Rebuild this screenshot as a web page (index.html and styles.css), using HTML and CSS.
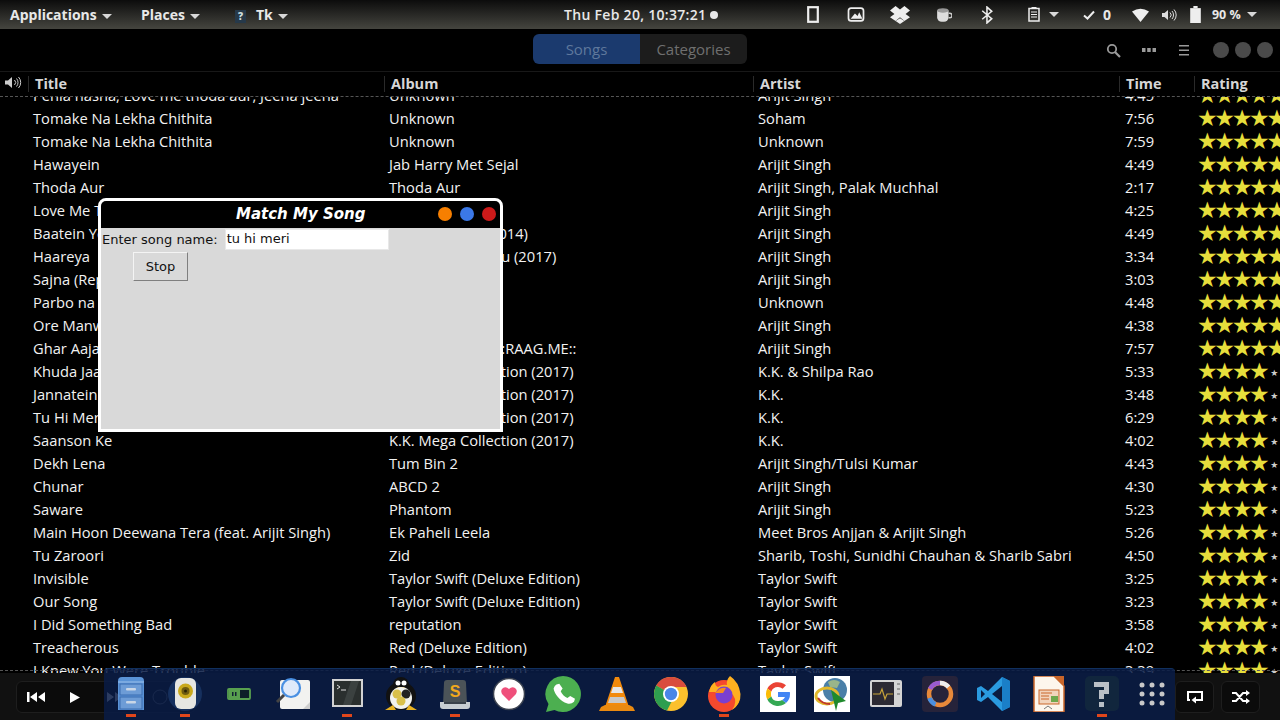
FILE: index.html
```html
<!DOCTYPE html>
<html lang="en">
<head>
  <meta charset="UTF-8" />
  <title>Music</title>
  <link rel="stylesheet" href="styles.css">
</head>
<body>

  <!-- Top panel -->
  <header class="panel">
    <div class="panel-left">
      <span class="menu menu-apps">Applications<i class="caret"></i></span>
      <span class="menu menu-places">Places<i class="caret"></i></span>
      <span class="menu menu-tk"><b class="tk-icon">?</b>Tk<i class="caret"></i></span>
    </div>
    <div class="clock">Thu Feb 20, 10:37:21<i class="clock-dot"></i></div>
    <div class="panel-right">
      <span class="tray"><svg width="12" height="17" viewBox="0 0 12 17"><rect x="1.200" y="1.200" width="9.600" height="14.600" fill="none" stroke="#eee" stroke-width="2.200"/></svg></span>
      <span class="tray"><svg width="18" height="15" viewBox="0 0 16 14"><rect x="1" y="1" width="14" height="12" rx="2.500" fill="none" stroke="#eee" stroke-width="1.600"/><path d="M3 11 7 6l2.500 2.500L11 5l3 6z" fill="#eee"/></svg></span>
      <span class="tray"><svg width="20" height="18" viewBox="0 0 18 16"><path d="M5 0 9 3l4-3 5 4-4 3 4 3-5 3.500L9 10l-4 3.500L0 10l4-3-4-3z" fill="#eee"/><path d="M5 13.500 9 11l4 2.500L9 16z" fill="#eee"/></svg></span>
      <span class="tray"><svg width="16" height="16" viewBox="0 0 14 14"><path d="M1 3h10v6a4 4 0 0 1-4 4H5a4 4 0 0 1-4-4z" fill="#ddd"/><ellipse cx="6" cy="3" rx="5" ry="2" fill="#999"/><path d="M11 5.500h1a1.500 1.500 0 0 1 0 4h-1" fill="none" stroke="#ccc" stroke-width="1.300"/></svg></span>
      <span class="tray"><svg width="13" height="18" viewBox="0 0 12 17"><path d="M1 4.500 10 12l-4.500 4V1L10 5l-9 7.500" fill="none" stroke="#eee" stroke-width="1.500"/></svg></span>
      <span class="tray tray-clip"><svg width="12" height="15" viewBox="0 0 12 15"><rect x="1" y="1.500" width="10" height="12.500" fill="none" stroke="#eee" stroke-width="1.500"/><path d="M3 5h6M3 7.500h6M3 10h6" stroke="#eee" stroke-width="1.200"/><rect x="3.500" y="0" width="5" height="2" fill="#eee"/></svg><i class="caret"></i></span>
      <span class="tray tray-check"><svg width="12" height="10" viewBox="0 0 12 10"><path d="M1 5.500 4.500 8.500 11 1.500" fill="none" stroke="#eee" stroke-width="2"/></svg><em>0</em></span>
      <span class="tray tray-wifi"><svg width="17" height="14" viewBox="0 0 17 14"><path d="M0 3.500Q8.500-2 17 3.500L8.500 14z" fill="#eee"/></svg></span>
      <span class="tray tray-vol"><svg width="17" height="12" viewBox="0 0 15 12"><path d="M0 4h2.500L6 1v10L2.500 8H0z" fill="#ddd"/><path d="M8 3.500a3.500 3.500 0 0 1 0 5M10 2a6 6 0 0 1 0 8M12 .5a8 8 0 0 1 0 11" fill="none" stroke="#ddd" stroke-width="1"/></svg></span>
      <span class="tray tray-batt"><svg width="11" height="17" viewBox="0 0 10 16"><rect x="3" y="0" width="4" height="2" fill="#eee"/><rect x="0" y="2" width="10" height="14" fill="#eee"/></svg></span>
      <span class="tray tray-percent">90 %<i class="caret"></i></span>
    </div>
  </header>

  <!-- Toolbar -->
  <div class="toolbar">
    <div class="tabs">
      <span class="tab tab-active">Songs</span>
      <span class="tab">Categories</span>
    </div>
    <div class="tools">
      <svg class="tool-search" width="15" height="15" viewBox="0 0 15 15"><circle cx="6" cy="6" r="4.200" fill="none" stroke="#9a9a9a" stroke-width="1.800"/><path d="M9 9l5 5" stroke="#9a9a9a" stroke-width="2.200"/></svg>
      <svg class="tool-more" width="14" height="4" viewBox="0 0 14 4"><path d="M0 0h3.500v4H0zM5.200 0h3.500v4H5.200zM10.500 0H14v4h-3.500z" fill="#9a9a9a"/></svg>
      <svg class="tool-menu" width="10" height="11" viewBox="0 0 10 11"><path d="M0 0h10v1.600H0zM0 4.500h10v1.600H0zM0 9h10v1.600H0z" fill="#9a9a9a"/></svg>
      <span class="win-dots"><i></i><i></i><i></i></span>
    </div>
  </div>

  <!-- Column headers -->
  <div class="columns">
    <span class="col-icon"><svg width="18" height="13" viewBox="0 0 18 13"><path d="M0 4.500h3L7 1v11L3 8.500H0z" fill="#ccc"/><path d="M9.500 4a3.500 3.500 0 0 1 0 5M11.500 2.500a6 6 0 0 1 0 8M13.500 1a8 8 0 0 1 0 11" fill="none" stroke="#ccc" stroke-width="1"/></svg></span>
    <span>Title</span>
    <span>Album</span>
    <span>Artist</span>
    <span>Time</span>
    <span>Rating</span>
  </div>

  <!-- Songs -->
  <main class="song-list">
    <div class="songs">
      <div class="row"><span>Pehla nasha, Love me thoda aur, Jeena jeena</span><span>Unknown</span><span>Arijit Singh</span><span>4:45</span><span class="stars">★★★★★</span></div>
      <div class="row"><span>Tomake Na Lekha Chithita</span><span>Unknown</span><span>Soham</span><span>7:56</span><span class="stars">★★★★★</span></div>
      <div class="row"><span>Tomake Na Lekha Chithita</span><span>Unknown</span><span>Unknown</span><span>7:59</span><span class="stars">★★★★★</span></div>
      <div class="row"><span>Hawayein</span><span>Jab Harry Met Sejal</span><span>Arijit Singh</span><span>4:49</span><span class="stars">★★★★★</span></div>
      <div class="row"><span>Thoda Aur</span><span>Thoda Aur</span><span>Arijit Singh, Palak Muchhal</span><span>2:17</span><span class="stars">★★★★★</span></div>
      <div class="row"><span>Love Me Thoda Aur</span><span>Yaariyan</span><span>Arijit Singh</span><span>4:25</span><span class="stars">★★★★★</span></div>
      <div class="row"><span>Baatein Ye Kabhi Na</span><span>Khamoshiyan (2014)</span><span>Arijit Singh</span><span>4:49</span><span class="stars">★★★★★</span></div>
      <div class="row"><span>Haareya</span><span>Meri Pyaari Bindu (2017)</span><span>Arijit Singh</span><span>3:34</span><span class="stars">★★★★★</span></div>
      <div class="row"><span>Sajna (Reprise)</span><span>Unknown</span><span>Arijit Singh</span><span>3:03</span><span class="stars">★★★★★</span></div>
      <div class="row"><span>Parbo na</span><span>Unknown</span><span>Unknown</span><span>4:48</span><span class="stars">★★★★★</span></div>
      <div class="row"><span>Ore Manwa</span><span>Unknown</span><span>Arijit Singh</span><span>4:38</span><span class="stars">★★★★★</span></div>
      <div class="row"><span>Ghar Aaja</span><span>Ghar Aaja Song ::RAAG.ME::</span><span>Arijit Singh</span><span>7:57</span><span class="stars">★★★★★</span></div>
      <div class="row"><span>Khuda Jaane</span><span>K.K. Mega Collection (2017)</span><span>K.K. &amp; Shilpa Rao</span><span>5:33</span><span class="stars">★★★★<small>★</small></span></div>
      <div class="row"><span>Jannatein Kahan</span><span>K.K. Mega Collection (2017)</span><span>K.K.</span><span>3:48</span><span class="stars">★★★★<small>★</small></span></div>
      <div class="row"><span>Tu Hi Meri Shab Hai</span><span>K.K. Mega Collection (2017)</span><span>K.K.</span><span>6:29</span><span class="stars">★★★★<small>★</small></span></div>
      <div class="row"><span>Saanson Ke</span><span>K.K. Mega Collection (2017)</span><span>K.K.</span><span>4:02</span><span class="stars">★★★★<small>★</small></span></div>
      <div class="row"><span>Dekh Lena</span><span>Tum Bin 2</span><span>Arijit Singh/Tulsi Kumar</span><span>4:43</span><span class="stars">★★★★<small>★</small></span></div>
      <div class="row"><span>Chunar</span><span>ABCD 2</span><span>Arijit Singh</span><span>4:30</span><span class="stars">★★★★<small>★</small></span></div>
      <div class="row"><span>Saware</span><span>Phantom</span><span>Arijit Singh</span><span>5:23</span><span class="stars">★★★★<small>★</small></span></div>
      <div class="row"><span>Main Hoon Deewana Tera (feat. Arijit Singh)</span><span>Ek Paheli Leela</span><span>Meet Bros Anjjan &amp; Arijit Singh</span><span>5:26</span><span class="stars">★★★★<small>★</small></span></div>
      <div class="row"><span>Tu Zaroori</span><span>Zid</span><span>Sharib, Toshi, Sunidhi Chauhan &amp; Sharib Sabri</span><span>4:50</span><span class="stars">★★★★<small>★</small></span></div>
      <div class="row"><span>Invisible</span><span>Taylor Swift (Deluxe Edition)</span><span>Taylor Swift</span><span>3:25</span><span class="stars">★★★★<small>★</small></span></div>
      <div class="row"><span>Our Song</span><span>Taylor Swift (Deluxe Edition)</span><span>Taylor Swift</span><span>3:23</span><span class="stars">★★★★<small>★</small></span></div>
      <div class="row"><span>I Did Something Bad</span><span>reputation</span><span>Taylor Swift</span><span>3:58</span><span class="stars">★★★★<small>★</small></span></div>
      <div class="row"><span>Treacherous</span><span>Red (Deluxe Edition)</span><span>Taylor Swift</span><span>4:02</span><span class="stars">★★★★<small>★</small></span></div>
      <div class="row"><span>I Knew You Were Trouble</span><span>Red (Deluxe Edition)</span><span>Taylor Swift</span><span>3:39</span><span class="stars">★★★★<small>★</small></span></div>
    </div>
  </main>

  <!-- Player controls -->
  <footer class="player">
    <div class="ctrl-group">
      <svg width="20" height="10" viewBox="0 0 20 10"><path d="M0 0h2.500v10H0zM10 0v10L3 5zM18 0v10l-7-5z" fill="#fff"/></svg>
      <svg class="ctrl-play" width="10" height="11" viewBox="0 0 10 11"><path d="M0 0l10 5.500L0 11z" fill="#fff"/></svg>
      <svg class="ctrl-next" width="15" height="10" viewBox="0 0 15 10"><path d="M0 0v10l7-5zM8 0v10l7-5z" fill="#fff"/></svg>
      <svg class="ctrl-seek" width="16" height="16" viewBox="0 0 16 16"><circle cx="8" cy="8" r="7" fill="none" stroke="#777" stroke-width="1"/></svg>
    </div>
    <div class="ctrl-right">
      <span class="ctrl-box"><svg width="16" height="14" viewBox="0 0 16 14"><path d="M3 10H1V2h14v8H8" fill="none" stroke="#fff" stroke-width="2"/><path d="M9 6.500v7L4.500 10z" fill="#fff"/></svg></span>
      <span class="ctrl-box"><svg width="18" height="14" viewBox="0 0 18 14"><path d="M0 3h4l7 8h3M0 11h4l7-8h3" fill="none" stroke="#fff" stroke-width="2"/><path d="M14 0l4 3-4 3zM14 8l4 3-4 3z" fill="#fff"/></svg></span>
    </div>
  </footer>

  <!-- Dock -->
  <nav class="dock">
    <div class="dock-item running"><svg viewBox="0 0 36 36"><path d="M5 5q0-4 4-4h18q4 0 4 4v29H5z" fill="#5a93d6"/><path d="M5 6h26" stroke="#9cc0ea" stroke-width="1"/><rect x="7" y="8" width="22" height="11" fill="#6d9cd6" stroke="#3a6cb0"/><rect x="7" y="21" width="22" height="12" fill="#6d9cd6" stroke="#3a6cb0"/><rect x="13" y="12" width="10" height="2.500" rx="1" fill="#c9d6e6"/><rect x="13" y="25" width="10" height="2.500" rx="1" fill="#c9d6e6"/></svg><i></i></div>
    <div class="dock-item running"><svg viewBox="0 0 36 36"><circle cx="18" cy="18" r="17" fill="#16305e"/><rect x="8" y="2" width="21" height="31" rx="6" fill="#e6e6e2"/><circle cx="18.500" cy="15" r="7.500" fill="#c9a91c"/><circle cx="18.500" cy="15" r="4" fill="#6f5c10"/><circle cx="18.500" cy="15" r="1.500" fill="#2b2406"/></svg><i></i></div>
    <div class="dock-item"><svg viewBox="0 0 36 36"><rect x="7" y="13" width="22" height="10" rx="1" fill="#0e1f28" stroke="#58a04f" stroke-width="1.800"/><rect x="8" y="14" width="11" height="8" fill="#58a04f"/><rect x="11" y="16" width="1.500" height="4" fill="#123"/><rect x="14" y="16" width="1.500" height="4" fill="#123"/></svg></div>
    <div class="dock-item"><svg viewBox="0 0 36 36"><rect x="5" y="4" width="30" height="29" rx="2" fill="#f2f2f0"/><path d="M28 33l7-7v7z" fill="#cfcfcf"/><circle cx="16" cy="12" r="9" fill="#dfeafa" stroke="#4a90e2" stroke-width="2.200"/><path d="M9 19 2 26" stroke="#444" stroke-width="3"/></svg></div>
    <div class="dock-item running"><svg viewBox="0 0 36 36"><rect x="3" y="3" width="31" height="28" fill="#d2d2d2"/><rect x="5" y="5" width="27" height="24" fill="#2a2f2e"/><path d="M22 5 14 29h8l8-24z" fill="#3b4140"/><path d="M8 9l3 2-3 2" fill="none" stroke="#ddd" stroke-width="1"/><path d="M12 14h5" stroke="#ddd" stroke-width="1"/></svg><i></i></div>
    <div class="dock-item"><svg viewBox="0 0 36 36"><ellipse cx="18" cy="20" rx="15" ry="14" fill="#111"/><ellipse cx="18" cy="9" rx="8" ry="8" fill="#111"/><circle cx="15" cy="7" r="2.500" fill="#fff"/><circle cx="21" cy="7" r="2.500" fill="#fff"/><path d="M14 11h8l-4 3z" fill="#e3a91c"/><ellipse cx="18" cy="22" rx="11" ry="11" fill="#f2f2ee"/><circle cx="14" cy="18" r="4.500" fill="#d9c04a"/><circle cx="23" cy="18" r="4.500" fill="#222"/><circle cx="18" cy="25" r="4.500" fill="#d9c04a"/><path d="M2 34l8-5 3 5zM34 34l-8-5-3 5z" fill="#e9b320"/></svg></div>
    <div class="dock-item running"><svg viewBox="0 0 36 36"><path d="M6 28 7 7q0-3 3-3h16q3 0 3 3l1 21z" fill="#4b5358"/><path d="M3 26h30v4q0 3-3 3H6q-3 0-3-3z" fill="#c8ced2"/><path d="M7 26h22v2H7z" fill="#39414a"/><text x="18" y="21" class="sublime-s">S</text></svg><i></i></div>
    <div class="dock-item"><svg viewBox="0 0 36 36"><circle cx="18" cy="18" r="15.500" fill="#fff" stroke="#3b4250" stroke-width="1.500"/><path d="M18 25l-7-7q-2-4 1-6t6 1q3-3 6-1t1 6z" fill="#ef4f7b"/></svg></div>
    <div class="dock-item"><svg viewBox="0 0 36 36"><path d="M18 0a18 18 0 1 1-8.500 33.900L1 36l2.500-8A18 18 0 0 1 18 0z" fill="#4caf50"/><path d="M11 8l3-1 3.500 5-2 3q2 5 7 7l3-2 5 3-1 3q-3 3-7 2-6-2-10-7T8 12q1-3 3-4z" fill="#fff" transform="translate(1 1) scale(.95)"/></svg></div>
    <div class="dock-item"><svg viewBox="0 0 36 36"><path d="M16 1h4l10 30H6z" fill="#f28a0c"/><path d="M14 11h8l2 6H12z" fill="#e6e6e6"/><path d="M11 21h14l2 6H9z" fill="#c9c9c9"/><path d="M6 29h24l4 2 2 4H0l2-4z" fill="#ea8a10"/></svg></div>
    <div class="dock-item"><svg viewBox="0 0 36 36"><circle cx="18" cy="18" r="17" fill="#fbc02d"/><path d="M18 18 3.300 9.500A17 17 0 0 1 33.500 11H18z" fill="#d94c3d"/><path d="M18 18 3.300 9.500A17 17 0 0 0 14 34.500L22 19z" fill="#2e9e4f"/><circle cx="18" cy="18" r="8" fill="#fff"/><circle cx="18" cy="18" r="6.200" fill="#4a86e8"/></svg></div>
    <div class="dock-item running"><svg viewBox="0 0 36 36"><circle cx="18" cy="20" r="16" fill="#f5492d"/><path d="M3 16Q5 8 9 6q0 4 3 5 4-3 9-2-1-5 3-9 9 6 10.500 18Q35 28 26 34q6-8 1-15-6-6-13-3z" fill="#ffb020"/><circle cx="18" cy="19" r="8.500" fill="#7a3fd0"/><path d="M9 17q5-6 11-5l-3 5z" fill="#f78a1e"/></svg><i></i></div>
    <div class="dock-item"><svg viewBox="0 0 36 36"><rect width="36" height="36" fill="#fff"/><path d="M18 11a7 7 0 0 1 4.600 1.700l3.400-3.400A12 12 0 0 0 7.300 12.600l4 3A7 7 0 0 1 18 11z" fill="#ea4335"/><path d="M11 18a7 7 0 0 1 .3-2.400l-4-3a12 12 0 0 0 0 10.800l4-3A7 7 0 0 1 11 18z" fill="#fbbc05"/><path d="M18 25a7 7 0 0 1-6.700-4.600l-4 3A12 12 0 0 0 26 27l-3.800-3A7 7 0 0 1 18 25z" fill="#34a853"/><path d="M30 16H18v5h7a6 6 0 0 1-2.800 3l3.800 3q4-3.500 4-9 0-1-.2-2z" fill="#4285f4"/></svg></div>
    <div class="dock-item"><svg viewBox="0 0 36 36"><rect width="36" height="36" fill="#fff"/><circle cx="21" cy="14" r="12" fill="#4a7fa8"/><path d="M14 6q6-4 12 0l-3 6-7-1z" fill="#9ab58a"/><ellipse cx="13" cy="20" rx="11" ry="8" fill="none" stroke="#e2b92c" stroke-width="3"/><path d="M4 22q4 6 12 6" fill="none" stroke="#c0392b" stroke-width="2"/><path d="M17 14l15 11-8 2-2 8z" fill="#1f8a2c"/></svg></div>
    <div class="dock-item"><svg viewBox="0 0 36 36"><rect x="2" y="4" width="32" height="27" rx="2" fill="#d4d4d4"/><rect x="4" y="6" width="22" height="23" fill="#2c2a33"/><path d="M5 18h7l2-5 3 10 2-5h6" fill="none" stroke="#c8a43a" stroke-width="1.200"/><path d="M29 8h3M29 13h3M29 18h3" stroke="#888" stroke-width="1.500"/></svg></div>
    <div class="dock-item"><svg viewBox="0 0 36 36"><rect width="36" height="36" rx="4" fill="#26233a"/><circle cx="18" cy="18" r="11" fill="none" stroke="#e8893a" stroke-width="4.500"/><path d="M8 13a11 11 0 0 1 10-6" fill="none" stroke="#9a5bd0" stroke-width="4.500"/><path d="M7.500 22a11 11 0 0 0 6 6.500" fill="none" stroke="#4a8fe0" stroke-width="4.500"/><path d="M18 7a11 11 0 0 1 8.500 4" fill="none" stroke="#eee" stroke-width="4.500"/></svg></div>
    <div class="dock-item"><svg viewBox="0 0 36 36"><path d="M26 1l8 4v26l-8 4-14-14-7 5-4-2V12l4-2 7 5z" fill="#2a9be0"/><path d="M26 1v34l8-4V5z" fill="#1a7fc8"/><path d="M26 10 16 18l10 8z" fill="#0a1c40"/><path d="M5 14v8l4-4z" fill="#0a1c40"/></svg></div>
    <div class="dock-item"><svg viewBox="0 0 36 36"><path d="M4 0h20l10 10v26H4z" fill="#fdf6ec" stroke="#c9662a" stroke-width="1.500"/><path d="M24 0h10v10z" fill="#c9662a"/><rect x="9" y="14" width="20" height="14" fill="#f2d4bc" stroke="#c9662a"/><path d="M11 17h11M11 20h8M11 23h8" stroke="#c9662a" stroke-width="1.200"/><rect x="21" y="20" width="7" height="6" fill="#6fa84d"/><path d="M14 33l4-3 4 3" fill="none" stroke="#777"/></svg></div>
    <div class="dock-item running"><svg viewBox="0 0 36 36"><rect x="1" y="0" width="34" height="35" rx="5" fill="#11263d"/><path d="M10 6h15v12h-5v5h-5v-9h5v-3h-10z" fill="#b9c0c6"/><rect x="15" y="26" width="5" height="5" fill="#b9c0c6"/></svg><i></i></div>
    <div class="dock-item dock-grid"><svg viewBox="0 0 36 36"><g fill="#c8c8c8"><circle cx="8" cy="9" r="2.500"/><circle cx="18" cy="9" r="2.500"/><circle cx="28" cy="9" r="2.500"/><circle cx="8" cy="18" r="2.500"/><circle cx="18" cy="18" r="2.500"/><circle cx="28" cy="18" r="2.500"/><circle cx="8" cy="27" r="2.500"/><circle cx="18" cy="27" r="2.500"/><circle cx="28" cy="27" r="2.500"/></g></svg></div>
  </nav>

  <!-- Tk window -->
  <section class="tk-window">
    <div class="tk-title">
      <span>Match My Song</span>
      <div class="tk-dots"><i class="dot-orange"></i><i class="dot-blue"></i><i class="dot-red"></i></div>
    </div>
    <div class="tk-body">
      <div class="tk-line">
        <label>Enter song name:</label>
        <div class="tk-entry">tu hi meri</div>
      </div>
      <button class="tk-btn">Stop</button>
    </div>
  </section>

</body>
</html>
```

FILE: styles.css
```css
* {
  box-sizing: border-box;
}

body {
  margin: 0;
  width: 1280px;
  height: 720px;
  overflow: hidden;
  background: #000;
  color: #f2f2f2;
  font-family: "Open Sans", "Noto Sans", sans-serif;
  display: flex;
  flex-direction: column;
  position: relative;
}

i {
  display: block;
  font-style: normal;
}

.caret {
  display: inline-block;
  width: 0;
  height: 0;
  border-left: 5px solid transparent;
  border-right: 5px solid transparent;
  border-top: 5px solid #d8d8d8;
  vertical-align: middle;
}

/* top panel */
.panel {
  height: 29px;
  flex-shrink: 0;
  background: linear-gradient(#0c0c0c, #45453f);
  display: flex;
  align-items: center;
  font-size: 14px;
  font-weight: 700;
  color: #e8e8e8;
  position: relative;
}

.panel-left {
  display: flex;
  padding-left: 10px;
  width: 564px;
}

.menu .caret {
  margin-left: 5px;
}

.menu-apps {
  width: 131px;
}

.menu-places {
  width: 94px;
}

.tk-icon {
  display: inline-block;
  width: 11px;
  height: 13px;
  margin-right: 10px;
  background: #26394a;
  color: #cdd;
  font-size: 10px;
  line-height: 13px;
  text-align: center;
}

.clock {
  width: 227px;
  display: flex;
  align-items: center;
  letter-spacing: 0.3px;
  font-weight: 600;
}

.clock-dot {
  width: 8px;
  height: 8px;
  margin-left: 4px;
  border-radius: 50%;
  background: #e8e8e8;
}

.panel-right {
  flex: 1;
  display: flex;
  align-items: center;
}

.tray {
  width: 43.6px;
  display: flex;
  align-items: center;
  justify-content: center;
}

.tray-clip {
  width: 62px;
  gap: 9px;
  margin-left: 1px;
  padding-left: 6px;
}

.tray-check {
  width: 50px;
  gap: 8px;
}

.tray-check em {
  font-style: normal;
}

.tray-wifi {
  width: 32px;
  margin-left: 3px;
}

.tray-vol {
  width: 26px;
}

.tray-batt {
  width: 26px;
}

.tray-percent {
  width: auto;
  margin-left: 3px;
  gap: 6px;
  font-size: 12.5px;
}

/* toolbar */
.toolbar {
  height: 43px;
  flex-shrink: 0;
  border-bottom: 1px solid #181818;
  display: flex;
  align-items: center;
  padding-left: 533px;
}

.tabs {
  display: flex;
  height: 30px;
  margin-top: -2px;
}

.tab {
  width: 107px;
  background: #1c1c1c;
  color: #6f6f6f;
  font-size: 15px;
  line-height: 30px;
  text-align: center;
  border-radius: 0 6px 6px 0;
}

.tab-active {
  background: #1b3a6e;
  color: #5f789c;
  border-radius: 6px 0 0 6px;
}

.tools {
  margin-left: 359px;
  flex: 1;
  display: flex;
  align-items: center;
}

.tool-more {
  margin-left: 21px;
}

.tool-menu {
  margin-left: 23px;
}

.win-dots {
  display: flex;
  gap: 6px;
  margin-left: 24px;
}

.win-dots i {
  width: 16px;
  height: 16px;
  border-radius: 50%;
  background: #4a4a4a;
}

/* song columns */
.columns {
  height: 25px;
  flex-shrink: 0;
  display: grid;
  grid-template-columns: 28px 356px 369px 366px 75px 86px;
  align-items: center;
  font-size: 14.5px;
  font-weight: 700;
  color: #d6d6d6;
  border-bottom: 1px dashed #555;
  position: relative;
  z-index: 1;
}

.columns span {
  height: 16px;
  line-height: 16px;
  padding-left: 6px;
  border-left: 1px solid #2a2a2a;
}

.columns .col-icon {
  border-left: 0;
  padding-left: 5px;
}

.song-list {
  flex: 1;
  overflow: hidden;
  position: relative;
}

.song-list::after {
  content: "";
  position: absolute;
  left: 0;
  right: 0;
  bottom: 2px;
  border-top: 1px dashed #555;
}

.songs {
  margin-top: -13px;
}

.row {
  height: 23px;
  padding-left: 33px;
  display: grid;
  grid-template-columns: 356px 369px 367px 73px 82px;
  font-size: 14.7px;
  line-height: 23px;
  white-space: nowrap;
}

.stars {
  font-family: "DejaVu Sans", sans-serif;
  font-size: 23px;
  letter-spacing: -3.27px;
  color: #e6de3c;
  line-height: 23px;
  overflow: hidden;
  margin-left: -1px;
}

.stars small {
  display: inline-block;
  width: 16px;
  font-size: 9px;
  letter-spacing: 0;
  color: #ccc;
  text-align: center;
  vertical-align: 3px;
}

/* bottom player bar */
.player {
  height: 47px;
  flex-shrink: 0;
  background: #111;
  display: flex;
  justify-content: space-between;
  padding: 8px 20px 7px 16px;
}

.ctrl-group {
  width: 180px;
  display: flex;
  align-items: center;
  padding-left: 10px;
  background: #0b0b0b;
  border: 1px solid #1e1e1e;
  border-radius: 6px;
}

.ctrl-play {
  margin-left: 23px;
}

.ctrl-next {
  margin-left: 27px;
}

.ctrl-seek {
  margin-left: 30px;
}

.ctrl-right {
  display: flex;
  gap: 7px;
}

.ctrl-box {
  width: 39px;
  display: flex;
  align-items: center;
  justify-content: center;
  background: #0b0b0b;
  border: 1px solid #1e1e1e;
  border-radius: 6px;
}

.dock {
  position: absolute;
  left: 104px;
  top: 668px;
  width: 1071px;
  height: 52px;
  background: rgba(9, 28, 70, 0.86);
  border-top: 1px solid #10305e;
  border-radius: 4px 4px 0 0;
  display: flex;
  padding-top: 7px;
}

.dock-item {
  width: 54px;
  display: flex;
  flex-direction: column;
  align-items: center;
  gap: 2px;
}

.dock-item svg {
  width: 36px;
  height: 36px;
  flex-shrink: 0;
}

.dock-item i {
  width: 10px;
  height: 3px;
  background: #e0461b;
}

.dock-grid {
  width: 46px;
}

.sublime-s {
  font-family: "Liberation Sans", sans-serif;
  font-size: 16px;
  font-weight: 700;
  fill: #f2a91c;
  text-anchor: middle;
}

/* Tk window */
.tk-window {
  position: absolute;
  left: 98px;
  top: 198px;
  width: 405px;
  height: 234px;
  border: 3px solid #fff;
  border-radius: 8px 8px 0 0;
  background: #d9d9d9;
  display: flex;
  flex-direction: column;
  font-family: "DejaVu Sans", sans-serif;
  color: #111;
}

.tk-title {
  height: 27px;
  flex-shrink: 0;
  background: #000;
  border-radius: 5px 5px 0 0;
  display: flex;
  align-items: center;
  color: #fff;
  font-size: 15px;
  font-weight: 700;
  font-style: italic;
  padding: 0 0 2px 135px;
}

.tk-dots {
  display: flex;
  gap: 8px;
  margin-left: 73px;
}

.tk-dots i {
  width: 14px;
  height: 14px;
  border-radius: 50%;
}

.dot-orange {
  background: #f77f00;
}

.dot-blue {
  background: #3b78e7;
}

.dot-red {
  background: #cc1a1a;
}

.tk-body {
  font-size: 13px;
  padding: 1px 0 0 1px;
}

.tk-line {
  display: flex;
  align-items: center;
  gap: 7px;
  height: 21px;
}

.tk-entry {
  width: 164px;
  height: 21px;
  background: #fff;
  border: 1px solid #e8e8e8;
  line-height: 18px;
  padding-left: 1px;
}

.tk-btn {
  display: block;
  width: 55px;
  height: 29px;
  margin: 2px 0 0 31px;
  background: #d9d9d9;
  border: 1px solid;
  border-color: #f4f4f4 #7f7f7f #7f7f7f #f4f4f4;
  font-family: inherit;
  font-size: 13px;
  color: #111;
  padding: 0;
}
```
